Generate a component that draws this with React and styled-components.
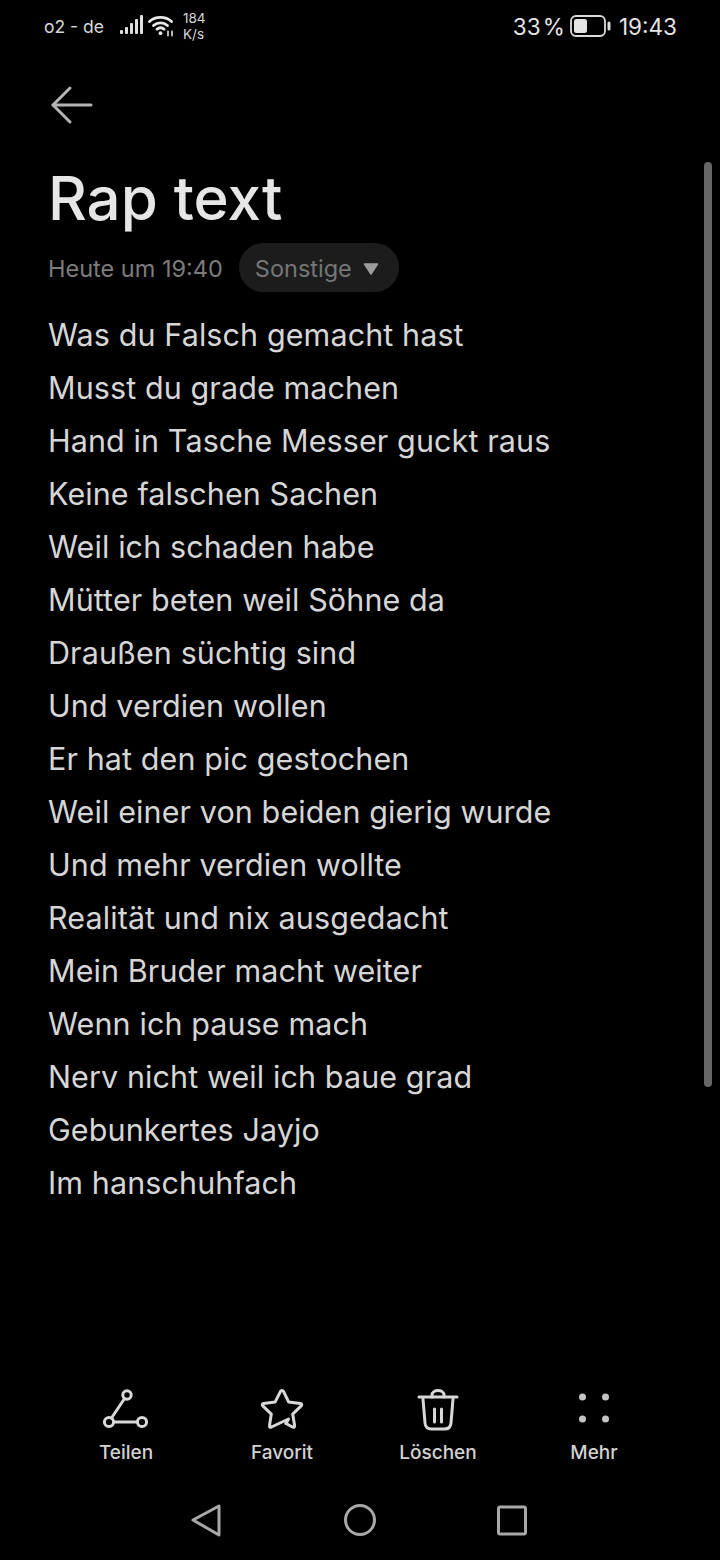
import React from 'react';
import styled, { createGlobalStyle } from 'styled-components';

const GlobalStyle = createGlobalStyle`
  html, body {
    margin: 0;
    padding: 0;
    background: #000;
  }
`;

const Page = styled.div`
  position: relative;
  width: 720px;
  height: 1560px;
  background: #000;
  color: #e6e6e6;
  font-family: Inter, Roboto, "Liberation Sans", sans-serif;
  display: flex;
  flex-direction: column;
  overflow: hidden;
`;

const StatusBar = styled.div`
  height: 52px;
  padding: 0 43px 0 44px;
  display: flex;
  align-items: center;
  justify-content: space-between;
`;

const StatusGroup = styled.div`
  display: flex;
  align-items: center;
`;

const Carrier = styled.span`
  font-size: 17.5px;
  color: #d8d8d8;
  margin-right: 15px;
`;

const Speed = styled.span`
  font-size: 13.5px;
  line-height: 16px;
  color: #d8d8d8;
  margin-left: 8px;
  text-align: left;
`;

const StatusText = styled.span`
  font-size: 22.5px;
  color: #e4e4e4;
  word-spacing: -4px;
`;

const Gap = styled.span`
  width: ${(props) => props.$size}px;
`;

const BackRow = styled.div`
  height: 56px;
  margin-top: 25px;
  padding-left: 50px;
  display: flex;
  align-items: center;
`;

const Content = styled.div`
  padding: 0 48px;
  flex: 1;
`;

const Title = styled.h1`
  margin: 29px 0 0;
  font-size: 60px;
  line-height: 72px;
  font-weight: 500;
  color: #e6e6e6;
`;

const Meta = styled.div`
  margin-top: 9px;
  display: flex;
  align-items: center;
  gap: 16px;
`;

const DateText = styled.span`
  margin-top: 2px;
  font-size: 23.5px;
  color: #7c7c7c;
`;

const CategoryPill = styled.div`
  width: 160px;
  height: 49px;
  box-sizing: border-box;
  padding: 2px 20px 0 16px;
  border-radius: 25px;
  background: #1c1c1c;
  display: flex;
  align-items: center;
  justify-content: space-between;
  font-size: 23.5px;
  color: #767676;
`;

const Lyrics = styled.div`
  margin-top: 16px;
`;

const Line = styled.div`
  font-size: 30.5px;
  line-height: 53px;
  letter-spacing: 0.1px;
  color: #d6d6d6;
  white-space: nowrap;
`;

const Scrollbar = styled.div`
  position: absolute;
  left: 704px;
  top: 162px;
  width: 8px;
  height: 925px;
  border-radius: 4px;
  background: #666;
`;

const Toolbar = styled.div`
  padding: 0 48px;
  display: grid;
  grid-template-columns: repeat(4, 156px);
`;

const ToolItem = styled.div`
  display: flex;
  flex-direction: column;
  align-items: center;
  font-size: 19px;
  font-weight: 500;
  color: #d2d2d2;
  gap: 7px;
`;

const ToolIcon = styled.svg`
  width: 48px;
  height: 48px;
  fill: none;
  stroke: #d8d8d8;
  stroke-width: 3;
  stroke-linecap: round;
  stroke-linejoin: round;
`;

const DotsIcon = styled(ToolIcon)`
  stroke: none;
  fill: #c4c4c4;
`;

const NavBar = styled.div`
  height: 78px;
  margin-top: 17px;
  margin-bottom: 1px;
  display: grid;
  grid-template-columns: repeat(3, 153px);
  justify-content: center;
  justify-items: center;
  align-items: center;
`;

const NavIcon = styled.svg`
  width: 36px;
  height: 36px;
  fill: none;
  stroke: #a8a8a8;
  stroke-width: 3;
  stroke-linejoin: round;
`;

const lines = [
  'Was du Falsch gemacht hast',
  'Musst du grade machen',
  'Hand in Tasche Messer guckt raus',
  'Keine falschen Sachen',
  'Weil ich schaden habe',
  'Mütter beten weil Söhne da',
  'Draußen süchtig sind',
  'Und verdien wollen',
  'Er hat den pic gestochen',
  'Weil einer von beiden gierig wurde',
  'Und mehr verdien wollte',
  'Realität und nix ausgedacht',
  'Mein Bruder macht weiter',
  'Wenn ich pause mach',
  'Nerv nicht weil ich baue grad',
  'Gebunkertes Jayjo',
  'Im hanschuhfach',
];

const SignalIcon = () => (
  <svg width="24" height="22" viewBox="0 0 24 22" fill="#e0e0e0">
    <rect x="1" y="15" width="3" height="4" rx="1" />
    <rect x="6" y="12" width="3" height="7" rx="1" />
    <rect x="11" y="8" width="3" height="11" rx="1" />
    <rect x="16" y="4" width="3" height="15" rx="1" />
    <rect x="21" y="0" width="3" height="19" rx="1" />
  </svg>
);

const WifiIcon = () => (
  <svg width="27" height="22" viewBox="0 0 27 22" fill="none" stroke="#e8e8e8" strokeWidth="2.8" strokeLinecap="round">
    <path d="M1.5 6.5C7.5 1 17.5 1 23.5 6.5" />
    <path d="M5.5 10.5C9.5 7 15.5 7 19.5 10.5" />
    <path d="M9 14.2C11 12.6 14 12.6 16 14.2" />
    <circle cx="12.5" cy="18.2" r="1.9" fill="#e8e8e8" stroke="none" />
    <path d="M20 16.2v4.6M24 16.2v4.6" strokeWidth="1.6" />
  </svg>
);

const BatteryIcon = () => (
  <svg width="41" height="22" viewBox="0 0 41 22" fill="none">
    <rect x="1" y="1" width="34" height="20" rx="5" stroke="#dcdcdc" strokeWidth="1.8" />
    <rect x="4" y="4" width="13" height="14" rx="2.5" fill="#e4e4e4" />
    <rect x="37.5" y="6.5" width="3" height="9" rx="1.5" fill="#dcdcdc" />
  </svg>
);

const BackArrow = () => (
  <svg width="44" height="40" viewBox="0 0 44 40" fill="none" stroke="#b4b4b4" strokeWidth="3" strokeLinecap="round" strokeLinejoin="round">
    <path d="M3 20H41" />
    <path d="M20 3L3 20L20 37" />
  </svg>
);

const ShareIcon = () => (
  <ToolIcon viewBox="0 0 48 48">
    <circle cx="25" cy="9" r="4.2" />
    <circle cx="7" cy="36" r="4.6" />
    <circle cx="40" cy="36" r="4.6" />
    <path d="M22.6 12.5L9.5 32M11.6 36H35.4" />
  </ToolIcon>
);

const StarIcon = () => (
  <ToolIcon viewBox="0 0 48 48">
    <g transform="translate(0 1.5)">
      <path d="M13.5 39.5C12 40.2 11.2 39.4 11.5 38L13.3 26.6L4.8 18.4C3.8 17.4 4.2 16.2 5.6 16L17.2 14.4L22.5 3.8C23.2 2.6 24.8 2.6 25.5 3.8L30.6 14.4L42.4 16C43.8 16.2 44.2 17.4 43.2 18.4L34.7 26.6L36.6 38C36.9 39.6 35.8 40.2 34.4 39.5L28 36" />
      <path d="M13.5 39.5L30.5 31.5L28 36" />
    </g>
  </ToolIcon>
);

const TrashIcon = () => (
  <ToolIcon viewBox="0 0 48 48">
    <path d="M5 11H43" />
    <path d="M18 11V9C18 3 30 3 30 9V11" />
    <path d="M9 13L11 37C11.4 41.5 14 43 17.5 43H30.5C34 43 36.6 41.5 37 37L39 13" />
    <path d="M20.5 23V36M27.5 23V36" />
  </ToolIcon>
);

const MoreIcon = () => (
  <DotsIcon viewBox="0 0 48 48">
    <circle cx="12.5" cy="11" r="3.5" />
    <circle cx="35.5" cy="11" r="3.5" />
    <circle cx="12.5" cy="33" r="3.5" />
    <circle cx="35.5" cy="33" r="3.5" />
  </DotsIcon>
);

const tools = [
  { label: 'Teilen', Icon: ShareIcon },
  { label: 'Favorit', Icon: StarIcon },
  { label: 'Löschen', Icon: TrashIcon },
  { label: 'Mehr', Icon: MoreIcon },
];

const App = () => {
  return (
    <Page>
      <GlobalStyle />
      <StatusBar>
        <StatusGroup>
          <Carrier>o2 - de</Carrier>
          <SignalIcon />
          <Gap $size={5} />
          <WifiIcon />
          <Speed>184<br />K/s</Speed>
        </StatusGroup>
        <StatusGroup>
          <StatusText>33 %</StatusText>
          <Gap $size={5} />
          <BatteryIcon />
          <Gap $size={8} />
          <StatusText>19:43</StatusText>
        </StatusGroup>
      </StatusBar>

      <BackRow>
        <BackArrow />
      </BackRow>

      <Content>
        <Title>Rap text</Title>
        <Meta>
          <DateText>Heute um 19:40</DateText>
          <CategoryPill>
            Sonstige
            <svg width="16" height="12" viewBox="0 0 16 12" fill="#9c9c9c">
              <path d="M1.5 1H14.5L8 11Z" stroke="#9c9c9c" strokeWidth="1.5" strokeLinejoin="round" />
            </svg>
          </CategoryPill>
        </Meta>
        <Lyrics>
          {lines.map((line) => (
            <Line key={line}>{line}</Line>
          ))}
        </Lyrics>
      </Content>

      <Scrollbar />

      <Toolbar>
        {tools.map(({ label, Icon }) => (
          <ToolItem key={label}>
            <Icon />
            {label}
          </ToolItem>
        ))}
      </Toolbar>

      <NavBar>
        <NavIcon viewBox="0 0 36 36">
          <path d="M4 18L30 4V33Z" />
        </NavIcon>
        <NavIcon viewBox="0 0 36 36">
          <circle cx="18" cy="18" r="14.5" />
        </NavIcon>
        <NavIcon viewBox="0 0 36 36">
          <rect x="3.5" y="5" width="27" height="27" rx="1.5" />
        </NavIcon>
      </NavBar>
    </Page>
  );
};

export default App;
